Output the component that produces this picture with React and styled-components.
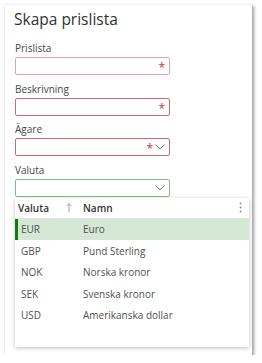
import styled, { createGlobalStyle } from "styled-components"

const GlobalStyle = createGlobalStyle`
    html, body {
        margin: 0;
        padding: 0;
        background: #fff;
    }
    body {
        font-family: "Open Sans", "Noto Sans", sans-serif;
        color: #333;
    }
`

const currencies = [
    { code: 'EUR', name: 'Euro' },
    { code: 'GBP', name: 'Pund Sterling' },
    { code: 'NOK', name: 'Norska kronor' },
    { code: 'SEK', name: 'Svenska kronor' },
    { code: 'USD', name: 'Amerikanska dollar' },
]

const fields = [
    { label: 'Prislista', state: 'soft', required: true },
    { label: 'Beskrivning', state: 'error', required: true },
    { label: 'Ägare', state: 'error', required: true, select: true },
    { label: 'Valuta', state: 'ok', select: true },
]

function Chevron () {
    return (
        <svg width="10" height="6" viewBox="0 0 10 6">
            <path d="M0.5 0.5 L5 5 L9.5 0.5" fill="none" stroke="#777" strokeWidth="1" />
        </svg>
    )
}

function SortArrow () {
    return (
        <svg width="6" height="10" viewBox="0 0 6 10">
            <path d="M3 9.5 V0.8 M0.5 3.2 L3 0.7 L5.5 3.2" fill="none" stroke="#8aa7bf" strokeWidth="1" />
        </svg>
    )
}

function Dots () {
    return (
        <svg width="3" height="11" viewBox="0 0 3 11">
            <circle cx="1.5" cy="1.5" r="0.9" fill="#888" />
            <circle cx="1.5" cy="5.5" r="0.9" fill="#888" />
            <circle cx="1.5" cy="9.5" r="0.9" fill="#888" />
        </svg>
    )
}

export default function App () {
    return (
        <>
            <GlobalStyle />
            <Panel>
                <Title>Skapa prislista</Title>
                {fields.map((f, i) => (
                    <Field key={f.label} last={i === fields.length - 1}>
                        <Label>{f.label}</Label>
                        <Input state={f.state}>
                            {f.required && <Asterisk>*</Asterisk>}
                            {f.select && <Chevron />}
                        </Input>
                    </Field>
                ))}
                <Dropdown>
                    <HeadRow>
                        <CodeCol width={65}>
                            <HeadText>Valuta</HeadText>
                            <SortArrow />
                        </CodeCol>
                        <HeadText>Namn</HeadText>
                        <Menu><Dots /></Menu>
                    </HeadRow>
                    {currencies.map((c, i) => (
                        <Row key={c.code} selected={i === 0}>
                            <CodeCol width={62}>{c.code}</CodeCol>
                            <span>{c.name}</span>
                        </Row>
                    ))}
                </Dropdown>
            </Panel>
        </>
    )
}

const Panel = styled.div`
    box-sizing: border-box;
    margin: 4px 0 0 4px;
    width: 248px;
    height: 351px;
    padding: 4px 5px 0 10px;
    background: #fff;
    border-left: 1px solid #f0f0f0;
    border-top: 1px solid #f0f0f0;
    box-shadow: 2px 2px 3px rgba(0, 0, 0, 0.38);
    display: flex;
    flex-direction: column;
`

const Title = styled.h1`
    margin: 0 0 12px -1px;
    font-size: 15.5px;
    line-height: 20px;
    font-weight: 400;
    color: #323130;
`

const Field = styled.div`
    display: flex;
    flex-direction: column;
    margin-bottom: ${props => props.last ? '1px' : '6.5px'};
`

const Label = styled.label`
    font-size: 10px;
    line-height: 14px;
    color: #444;
    margin-bottom: 2px;
`

const borders = {
    soft: '#e3a3a6',
    error: '#d0686c',
    ok: '#7cc07c',
}

const Input = styled.div`
    box-sizing: border-box;
    width: 155px;
    height: 18px;
    border: 1px solid ${props => borders[props.state]};
    border-radius: 2px;
    display: flex;
    align-items: center;
    justify-content: flex-end;
    gap: 2px;
    padding-right: 4px;
`

const Asterisk = styled.span`
    color: #c7343a;
    font-size: 12px;
    line-height: 12px;
    padding-top: 4px;
`

const Dropdown = styled.div`
    width: 234px;
    height: 149px;
    box-sizing: border-box;
    background: #fff;
    box-shadow: 0 1px 4px rgba(0, 0, 0, 0.25);
`

const HeadRow = styled.div`
    height: 20px;
    display: flex;
    align-items: center;
    padding-left: 3px;
    border-bottom: 1px solid #e4e4e4;
`

const CodeCol = styled.div`
    width: ${props => props.width}px;
    flex-shrink: 0;
    display: flex;
    align-items: center;
    justify-content: space-between;
    padding-right: 11px;
    box-sizing: border-box;
`

const HeadText = styled.span`
    font-size: 10px;
    font-weight: 600;
    color: #333;
`

const Menu = styled.div`
    margin-left: auto;
    margin-right: 7px;
    display: flex;
`

const Row = styled.div`
    height: 21.5px;
    display: flex;
    align-items: center;
    padding-left: ${props => props.selected ? '3px' : '6px'};
    font-size: 10px;
    color: #505050;
    background: ${props => props.selected ? '#d5e8d5' : 'transparent'};
    border-left: ${props => props.selected ? '3px solid #107c10' : 'none'};
`
